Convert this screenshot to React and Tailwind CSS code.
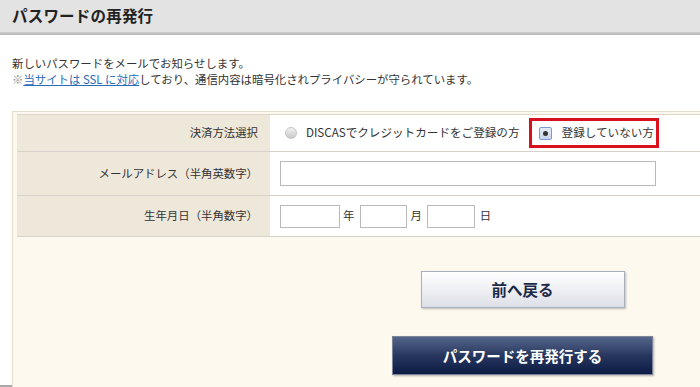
import React from 'react';

const font = { fontFamily: '"Noto Sans CJK JP", "Liberation Sans", sans-serif' };

function Radio({ checked }) {
  if (checked) {
    return (
      <span className="inline-flex items-center justify-center w-[13px] h-[13px] rounded-[2px] border border-[#7a9ad0] bg-gradient-to-b from-[#e6ecf6] to-[#c9d6ea]">
        <span className="w-[5px] h-[5px] rounded-full bg-[#333]" />
      </span>
    );
  }
  return (
    <span className="inline-block w-[12px] h-[12px] rounded-full border border-[#c4c4c4] bg-gradient-to-b from-[#f2f2f2] to-[#c8c8c8]" />
  );
}

function Row({ label, children, className = '' }) {
  return (
    <div className={'flex border-b border-[#d6d2ca] ' + className}>
      <div className="w-[253px] shrink-0 bg-[#eee8db] flex items-center justify-end pr-[12px] text-[11.4px] text-[#333]">
        {label}
      </div>
      <div className="flex-1 bg-white flex items-center pl-[10px]">{children}</div>
    </div>
  );
}

function Box({ w }) {
  return <div className={'h-[23px] border border-[#b9b9b9] bg-white ' + w} />;
}

export default function App() {
  return (
    <div className="w-[700px] h-[387px] overflow-hidden bg-white flex flex-col" style={font}>
      <div className="h-[32px] shrink-0 bg-[#e3e3e3] flex items-center pl-[12px]">
        <h1 className="text-[15.5px] font-bold text-[#222] tracking-[0.2px]">パスワードの再発行</h1>
      </div>
      <div className="h-[3px] shrink-0 bg-gradient-to-b from-[#cfcfcf] to-[#b5b5b5]" />

      <div className="pl-[12px] pt-[20px] pb-[24px] text-[11.4px] leading-[16px] text-[#333]">
        <p>新しいパスワードをメールでお知らせします。</p>
        <p>
          <span className="text-[#888]">※</span>
          <a className="text-[#2a6bb8] underline">当サイトは SSL に対応</a>
          しており、通信内容は暗号化されプライバシーが守られています。
        </p>
      </div>

      <div className="flex flex-1">
        <div className="w-[12px] shrink-0 flex flex-col justify-end">
          <div className="h-[2px] bg-[#aaa]" />
        </div>
        <div className="flex-1 bg-[#fdf9ef] border-l border-t border-[#e4dccb] pt-[2px] pl-[4px]">
          <div className="border-t border-[#ddd6c6]">
            <Row label="決済方法選択" className="h-[37px]">
              <div className="flex items-center text-[11.6px] text-[#333]">
                <span className="ml-[5px] mr-[9px] flex"><Radio /></span>
                <span>DISCASでクレジットカードをご登録の方</span>
                <div className="ml-[9px] w-[130px] h-[30px] border-[3px] border-[#d8111e] flex items-center pl-[7px]">
                  <Radio checked />
                  <span className="ml-[10px]">登録していない方</span>
                </div>
              </div>
            </Row>
            <Row label="メールアドレス（半角英数字）" className="h-[44px]">
              <div className="h-[25px] w-[376px] border border-[#b9b9b9] bg-white" />
            </Row>
            <Row label="生年月日（半角数字）" className="h-[41px]">
              <div className="flex items-center text-[11.4px] text-[#333]">
                <Box w="w-[60px]" />
                <span className="ml-[3px] mr-[6px]">年</span>
                <Box w="w-[47px]" />
                <span className="ml-[3px] mr-[5px]">月</span>
                <Box w="w-[48px]" />
                <span className="ml-[5px]">日</span>
              </div>
            </Row>
          </div>

          <div className="pl-[375px] pt-[34px] flex">
            <div className="w-[261px] flex flex-col items-center">
              <button className="w-[204px] h-[37px] border border-[#a9afbd] bg-gradient-to-b from-white to-[#dde0e7] shadow-[1px_1px_2px_rgba(0,0,0,0.25)] text-[15.5px] font-bold text-[#1b2a48]">
                前へ戻る
              </button>
              <button className="mt-[28px] w-[261px] h-[39px] border border-[#7b8598] bg-gradient-to-b from-[#56668a] via-[#27375e] to-[#0d1c46] text-[14.5px] font-bold text-white shadow-[1px_1px_2px_rgba(0,0,0,0.3)]">
                パスワードを再発行する
              </button>
            </div>
          </div>
        </div>
      </div>
    </div>
  );
}
